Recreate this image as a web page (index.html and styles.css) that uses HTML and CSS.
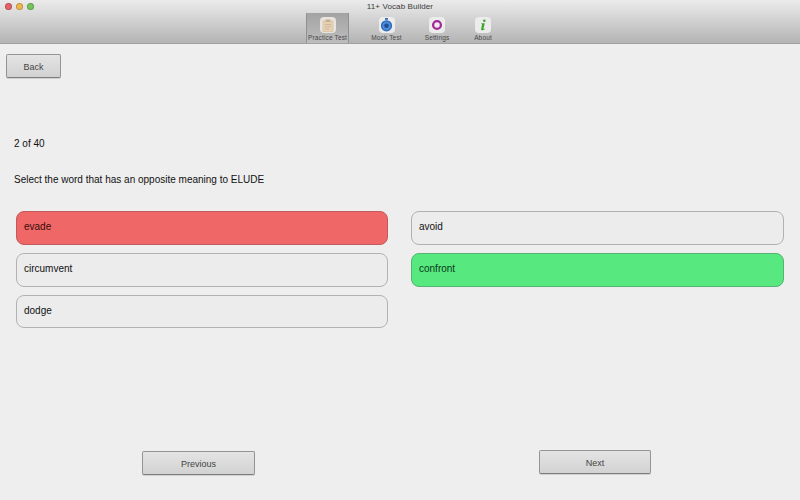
FILE: index.html
```html
<!DOCTYPE html>
<html lang="en">
<head>
<meta charset="utf-8">
<title>11+ Vocab Builder</title>
<link rel="stylesheet" href="styles.css">
</head>
<body>
<div class="window">
  <header class="chrome">
    <div class="lights">
      <span class="light red"></span><span class="light yellow"></span><span class="light green"></span>
    </div>
    <div class="title">11+ Vocab Builder</div>
    <nav class="toolbar">
      <div class="tool active">
        <span class="tile">
          <svg width="12" height="13" viewBox="0 0 12 13"><path d="M1 2h10v10.500H1z" fill="#e6d0b4" stroke="#d8bf9f" stroke-width=".7"/><rect x="3.500" y=".5" width="5" height="2.400" rx=".8" fill="#c9ae92"/><path d="M3 5.500h6M3 7.700h6M3 9.900h4" stroke="#cdb193" stroke-width=".8"/></svg>
        </span>
        <span class="label">Practice Test</span>
      </div>
      <div class="tool mock">
        <span class="tile">
          <svg width="13" height="14" viewBox="0 0 13 14"><rect x="5" y="0" width="3" height="1.800" fill="#2f6fc0"/><circle cx="6.500" cy="7.800" r="5" fill="#4a8ad6" stroke="#2b68b8" stroke-width="1.200"/><circle cx="6.500" cy="7.800" r="2.300" fill="#1d4f96"/></svg>
        </span>
        <span class="label">Mock Test</span>
      </div>
      <div class="tool settings">
        <span class="tile">
          <svg width="12" height="12" viewBox="0 0 12 12"><circle cx="6" cy="6" r="3.900" fill="none" stroke="#a5289a" stroke-width="2.300"/></svg>
        </span>
        <span class="label">Settings</span>
      </div>
      <div class="tool about">
        <span class="tile">
          <svg width="10" height="12" viewBox="0 0 10 12"><circle cx="6.300" cy="1.700" r="1.300" fill="#3da52a"/><path d="M3.500 4.300h3.300L5.500 9.600c-.1.400.3.500 1.200 0l-.2.900C4.800 11.500 2.800 11.700 3.100 10.200L4.100 5.200 3.300 5z" fill="#3da52a"/></svg>
        </span>
        <span class="label">About</span>
      </div>
    </nav>
  </header>
  <main class="content">
    <button class="btn back">Back</button>
    <p class="count">2 of 40</p>
    <p class="question">Select the word that has an opposite meaning to ELUDE</p>
    <div class="options">
      <div class="option wrong">evade</div>
      <div class="option">avoid</div>
      <div class="option">circumvent</div>
      <div class="option right">confront</div>
      <div class="option">dodge</div>
    </div>
    <div class="pager">
      <button class="btn prev">Previous</button>
      <button class="btn next">Next</button>
    </div>
  </main>
</div>
</body>
</html>
```
FILE: styles.css
```css
* { box-sizing: border-box; }
html, body { margin: 0; height: 100%; }
body {
  font-family: "Liberation Sans", Arial, sans-serif;
  background: #eeeeee;
  color: #111;
  overflow: hidden;
}
.window { width: 800px; height: 500px; display: flex; flex-direction: column; }
.chrome {
  position: relative;
  height: 44px;
  flex: none;
  background: linear-gradient(#ebebeb 0, #dcdcdc 12px, #b5b5b5 42px);
  border-bottom: 1px solid #a2a2a2;
}
.lights { position: absolute; left: 5px; top: 3px; display: flex; gap: 4px; }
.light { width: 7px; height: 7px; border-radius: 50%; border: 1px solid rgba(0,0,0,.2); }
.red { background: #e8606a; }
.yellow { background: #eeb84c; }
.green { background: #76c55c; }
.title {
  height: 13px;
  padding-top: 1px;
  text-align: center;
  font-size: 8px;
  line-height: 11px;
  letter-spacing: .1px;
  color: #3a3a3a;
}
.toolbar { display: flex; gap: 23px; padding-left: 306px; }
.tool {
  height: 30px;
  width: 31px;
  display: flex;
  flex-direction: column;
  align-items: center;
  padding-top: 4px;
}
.tool.settings { width: 24px; }
.tool.about { width: 22px; }
.tool.active {
  width: 43px;
  margin-right: -1px;
  background: linear-gradient(#a3a3a3, #bdbdbd);
  border-left: 1px solid #919191;
  border-right: 1px solid #919191;
}
.tile {
  flex: none;
  width: 16px;
  height: 16px;
  border-radius: 4px;
  background: #ececec;
  display: flex;
  align-items: center;
  justify-content: center;
}
.active .tile { background: #e8e4de; }
.label {
  font-size: 6.500px;
  line-height: 9px;
  letter-spacing: .15px;
  color: #484848;
  white-space: nowrap;
}
.content { flex: 1; padding: 10px 15px 25px 6px; display: flex; flex-direction: column; }
.btn {
  font-family: inherit;
  font-size: 9px;
  color: #444;
  height: 24px;
  padding: 1px 0 0;
  border: 1px solid #949494;
  border-bottom-color: #7c7c7c;
  border-radius: 2px;
  background: linear-gradient(#e4e4e4, #d2d2d2);
  box-shadow: 0 1px 0 rgba(0,0,0,.12);
}
.back { width: 55px; align-self: flex-start; }
.count { margin: 60px 0 0 8px; font-size: 10px; line-height: 12px; color: #111; }
.question { margin: 24px 0 0 8px; font-size: 10px; line-height: 12px; color: #111; }
.options {
  margin: 25px 0 0 10px;
  display: grid;
  grid-template-columns: 372px 373px;
  column-gap: 23px;
  grid-template-rows: 34px 34px 33px;
  row-gap: 8px;
}
.option {
  border: 1px solid #b2b2b2;
  border-radius: 8px;
  background: #ececec;
  padding: 0 7px;
  font-size: 10px;
  line-height: 29px;
  color: #111;
}
.wrong { background: #ef6766; border-color: #c05a5c; color: #3a0c0c; }
.right { background: #57e87f; border-color: #55b471; color: #0c3a1a; }
.pager { margin-top: auto; margin-left: 136px; margin-right: 134px; display: flex; justify-content: space-between; align-items: flex-start; }
.prev { width: 113px; margin-top: 1px; }
.next { width: 112px; }
```
